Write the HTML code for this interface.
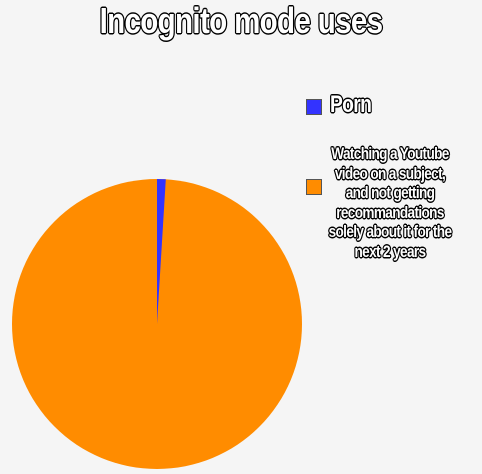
<!DOCTYPE html>
<html><head><style>
body{margin:0;width:482px;height:474px;background:#f5f5f5;overflow:hidden;position:relative;font-family:"Liberation Sans Narrow","Liberation Sans",sans-serif;font-weight:bold;}
.t{position:absolute;color:#fff;text-shadow:-1px -1px 0 #000,1px -1px 0 #000,-1px 1px 0 #000,1px 1px 0 #000,0 1.5px 0 #000,0 -1.5px 0 #000,1.5px 0 0 #000,-1.5px 0 0 #000;letter-spacing:-0.8px;transform-origin:center top;white-space:nowrap;}
.box{position:absolute;width:14px;height:14px;border:1px solid #555;}
</style></head><body>
<div class="t" style="left:-20px;width:522px;top:0px;text-align:center;font-size:36px;transform:scaleX(0.82);">Incognito mode uses</div>
<div class="box" style="left:306px;top:99px;background:#3333ff;"></div>
<div class="t" style="left:330px;top:91px;font-size:24px;transform:scaleX(0.8);transform-origin:left top;">Porn</div>
<div class="box" style="left:306px;top:179px;background:#ff8c00;"></div>
<div class="t" style="left:290px;top:144px;width:200px;text-align:center;font-size:17px;line-height:19.5px;transform:scaleX(0.8);">Watching a Youtube<br>video on a subject,<br>and not getting<br>recommandations<br>solely about it for the<br>next 2 years</div>
<svg style="position:absolute;left:0;top:0" width="482" height="474">
<circle cx="157" cy="324" r="145" fill="#ff8c00"/>
<path d="M157 324 L157 179 A145 145 0 0 1 165.8 179.3 Z" fill="#3333ff"/>
</svg>
</body></html>
